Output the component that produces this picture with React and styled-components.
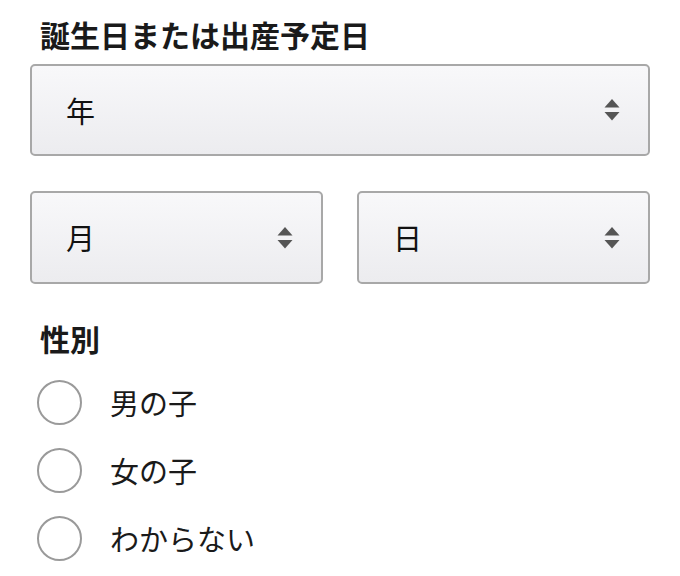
import React from "react";
import styled, { createGlobalStyle } from "styled-components";

const GlobalStyle = createGlobalStyle`
  html, body {
    margin: 0;
    padding: 0;
    background: #fff;
  }
  body {
    font-family: "Noto Sans CJK JP", "Noto Sans", sans-serif;
    color: #1a1a1a;
  }
`;

const Arrows = () => (
  <svg width="16" height="22" viewBox="0 0 16 22">
    <path d="M8 0 L15.5 8.5 L0.5 8.5 Z" fill="#555" />
    <path d="M0.5 13 L15.5 13 L8 21.5 Z" fill="#555" />
  </svg>
);

const App = () => {
  return (
    <Page>
      <GlobalStyle />
      <Heading>誕生日または出産予定日</Heading>
      <Select $height={92}>
        <Value>年</Value>
        <ArrowBox>
          <Arrows />
        </ArrowBox>
      </Select>
      <Row>
        <Select $height={93} $grow>
          <Value>月</Value>
          <ArrowBox>
            <Arrows />
          </ArrowBox>
        </Select>
        <Select $height={93} $grow>
          <Value>日</Value>
          <ArrowBox>
            <Arrows />
          </ArrowBox>
        </Select>
      </Row>
      <Heading $top={38}>性別</Heading>
      <RadioList>
        {["男の子", "女の子", "わからない"].map((label) => (
          <RadioRow key={label}>
            <Circle />
            <RadioLabel>{label}</RadioLabel>
          </RadioRow>
        ))}
      </RadioList>
    </Page>
  );
};

const Page = styled.div`
  width: 680px;
  padding: 18px 30px 0 30px;
  box-sizing: border-box;
  display: flex;
  flex-direction: column;
`;

const Heading = styled.h2`
  margin: ${(p) => p.$top || 0}px 0 4px 10px;
  font-size: 30px;
  line-height: 32px;
  font-weight: 700;
  color: #1a1a1a;
`;

const Select = styled.div`
  position: relative;
  flex: ${(p) => (p.$grow ? "1 1 0" : "none")};
  height: ${(p) => p.$height}px;
  margin-top: 10px;
  box-sizing: border-box;
  border: 2px solid #a8a8a8;
  border-radius: 5px;
  background: linear-gradient(#f8f8fa, #ececef);
  display: flex;
  align-items: center;
  padding-left: 34px;
`;

const Value = styled.span`
  font-size: 29px;
  line-height: 1;
  color: #111;
`;

const ArrowBox = styled.div`
  position: absolute;
  right: 28px;
  top: 50%;
  transform: translateY(-50%);
  display: flex;
`;

const Row = styled.div`
  display: flex;
  gap: 34px;
  margin-top: 25px;
`;

const RadioList = styled.div`
  display: flex;
  flex-direction: column;
  margin-top: 10px;
  padding-left: 7px;
`;

const RadioRow = styled.label`
  display: flex;
  align-items: center;
  height: 68px;
  gap: 28px;
`;

const Circle = styled.span`
  width: 45px;
  height: 45px;
  box-sizing: border-box;
  border: 2px solid #9a9a9a;
  border-radius: 50%;
  background: #fff;
`;

const RadioLabel = styled.span`
  font-size: 29px;
  color: #1a1a1a;
`;

export default App;
